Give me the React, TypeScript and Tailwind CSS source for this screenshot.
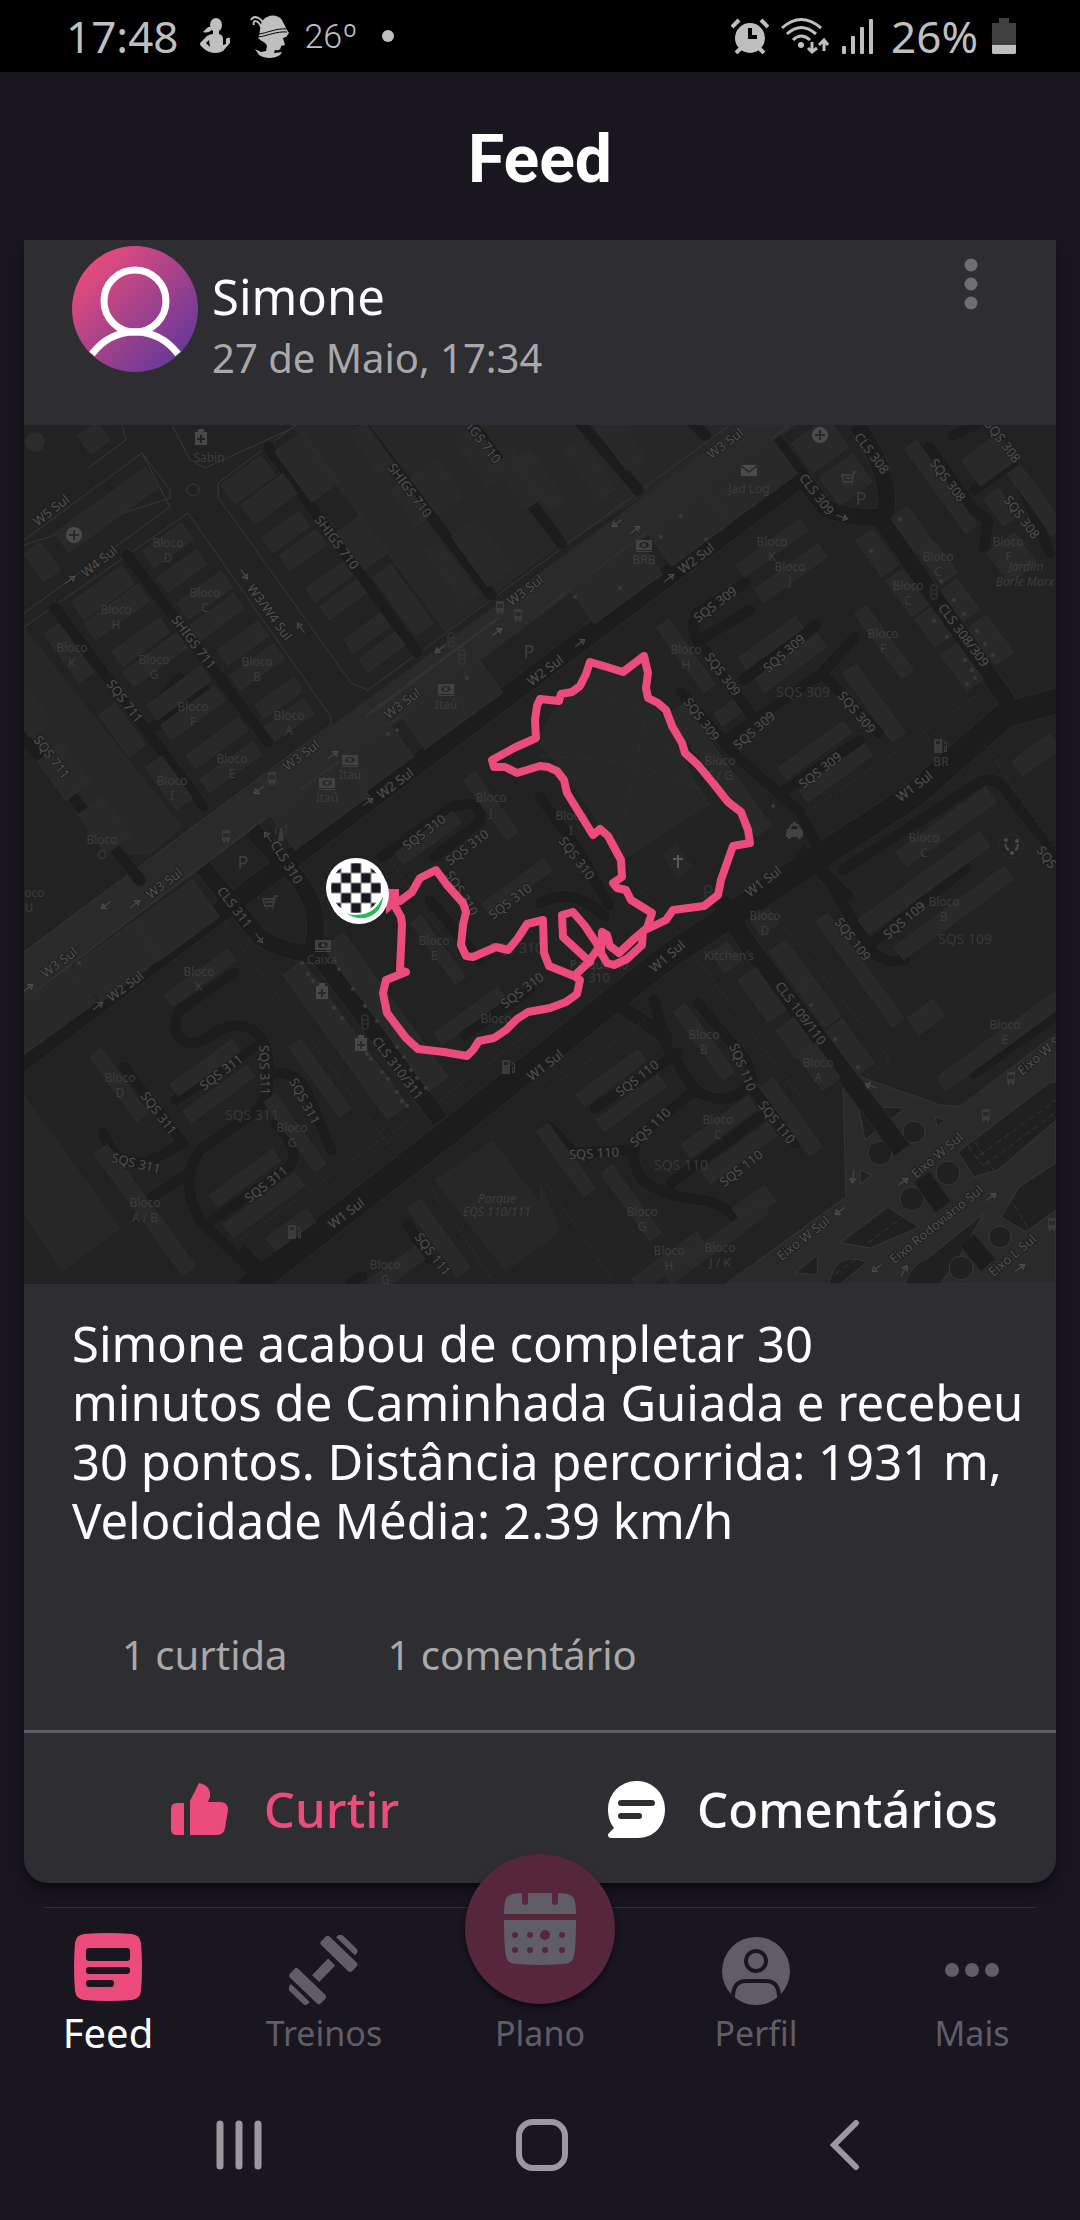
import React, { useState } from 'react';

type Point = [number, number];
type Label = [string, number, number, number];
type Block = [number, number, number, number];

// Bloco buildings: center x, center y, side along the W avenues, side across them
const blocks: Block[] = [
  [248, 480, 50, 24], [269, 499, 52, 24], [286, 532, 45, 18], [303, 550, 45, 18], [329, 582, 45, 16], [343, 600, 45, 16],
  [367, 633, 45, 16], [382, 652, 45, 16], [307, 467, 34, 62], [362, 543, 28, 46], [403, 600, 22, 72], [437, 487, 32, 44],
  [482, 553, 30, 62], [410, 503, 16, 44], [451, 573, 16, 62], [372, 448, 18, 50], [482, 457, 24, 54], [520, 480, 24, 54],
  [168, 545, 48, 20], [182, 571, 48, 18], [205, 595, 54, 20], [217, 617, 54, 18], [243, 643, 50, 18], [257, 667, 54, 18],
  [279, 698, 48, 16], [289, 720, 48, 18], [103, 593, 62, 22], [117, 612, 66, 20], [141, 642, 58, 18], [155, 660, 66, 18],
  [179, 693, 66, 18], [193, 713, 66, 18], [217, 743, 64, 16], [231, 767, 64, 16], [69, 653, 18, 60], [122, 730, 20, 52],
  [169, 783, 20, 52], [107, 510, 112, 24], [42, 562, 20, 34], [94, 438, 24, 22], [26, 710, 26, 48], [64, 772, 30, 48],
  [105, 825, 30, 48], [451, 703, 96, 44], [376, 758, 62, 42], [320, 806, 92, 42], [750, 480, 84, 46], [688, 527, 72, 44],
  [616, 582, 84, 42], [176, 920, 74, 46], [117, 962, 74, 46], [48, 1010, 90, 44], [820, 445, 44, 36], [846, 480, 40, 34],
  [772, 548, 78, 14], [791, 573, 78, 16], [686, 656, 14, 80], [771, 643, 70, 14], [791, 663, 76, 16], [884, 642, 14, 80],
  [874, 703, 16, 84], [815, 750, 80, 14], [836, 773, 80, 14], [728, 713, 24, 14], [720, 770, 18, 150], [877, 553, 20, 44],
  [907, 593, 20, 44], [933, 627, 20, 34], [962, 667, 20, 44], [912, 530, 20, 44], [938, 563, 20, 38], [960, 600, 20, 38],
  [991, 640, 22, 46], [941, 487, 14, 104], [989, 460, 44, 32], [1001, 507, 18, 34], [1036, 500, 16, 76], [1012, 558, 34, 38],
  [946, 827, 110, 18], [1036, 755, 46, 18], [540, 480, 18, 60], [590, 470, 20, 60], [618, 440, 22, 60], [200, 978, 78, 14],
  [119, 1085, 14, 80], [205, 1068, 76, 14], [219, 1094, 78, 14], [320, 1078, 14, 86], [295, 1133, 14, 86], [245, 1178, 78, 14],
  [264, 1205, 88, 16], [145, 1210, 16, 150], [291, 1230, 50, 16], [345, 1040, 24, 178], [386, 1012, 24, 178], [438, 950, 12, 76],
  [439, 1238, 16, 84], [396, 1270, 60, 16], [517, 887, 76, 14], [470, 1016, 78, 14], [428, 838, 70, 14], [491, 806, 14, 74],
  [762, 995, 22, 52], [795, 1038, 22, 34], [819, 1067, 22, 42], [793, 967, 20, 52], [819, 1003, 20, 46], [850, 1047, 20, 54],
  [860, 970, 14, 130], [926, 1017, 32, 20], [924, 883, 150, 18], [954, 913, 136, 16], [1002, 1040, 150, 16], [704, 1042, 14, 84],
  [611, 1078, 76, 14], [631, 1103, 76, 14], [719, 1127, 82, 16], [739, 1153, 82, 16], [791, 1117, 16, 84], [566, 1160, 14, 80],
  [631, 1203, 14, 84], [754, 1205, 40, 20], [716, 1243, 120, 14], [669, 1262, 80, 16], [726, 957, 20, 24], [765, 922, 22, 18],
];

const avenues: [string, number][] = [
  ['M10 1070 678 568 800 478', 20],
  ['M245 1290 344 1213 445 1135 667 957 914 795 1005 715 1060 700', 25],
  ['M203 867 258 935Q275 950 318 955L440 1120', 17],
  ['M252 830 293 873Q325 910 312 950', 17],
  ['M774 440 825 508Q860 522 884 516 895 480 857 425M878 516 1010 705', 17],
  ['M720 900 745 940 902 1150', 18],
  ['M922 1177 943 1207M967 1240 988 1265', 18],
  ['M800 850 850 900M612 1000 670 1040M240 1250 260 1270', 14],
];

const lanes = [
  'M127 555 268 742', 'M55 608 203 806', 'M10 720 140 880', 'M268 447 417 652', 'M362 425 491 595', 'M465 415 561 543',
  'M578 420 638 490', 'M680 410 705 435', 'M160 700 180 678', 'M150 730 205 690', 'M745 583 697 613Q690 625 697 640L760 727',
  'M750 610 705 637', 'M816 625 743 680', 'M855 637 822 673 726 740', 'M822 673 879 733', 'M681 692 733 753 800 812 819 850',
  'M860 740 781 793', 'M929 447 974 510 988 520 984 547', 'M953 435 975 425M974 490 1012 463 1050 553', 'M967 867 867 947',
  'M815 855 840 900 868 945Q880 965 905 960', 'M382 857 450 808Q482 795 480 822L434 857', 'M430 900 479 960', 'M540 903Q574 885 605 917',
  'M540 797 578 850 609 905', 'M465 1035 530 990', 'M234 973 180 1010Q168 1030 185 1042 200 1046 215 1032 250 1015 265 1045 275 1090 258 1110L200 1150Q178 1180 200 1220L248 1267',
  'M176 1100 255 1047', 'M124 1067 183 1143', 'M103 1133Q120 1175 158 1157L183 1143', 'M152 1197 189 1173', 'M270 1073Q300 1070 310 1098L331 1150',
  'M276 1123Q305 1155 285 1170L213 1220', 'M654 1000 667 1047 695 1090Q725 1110 750 1085L795 1143', 'M698 1003 742 1055Q755 1070 750 1085',
  'M695 1090 640 1135Q625 1160 645 1182 670 1198 705 1200 725 1205 740 1223', 'M595 1108 678 1053', 'M550 1127 574 1153 630 1150',
  'M671 1183 760 1117', 'M974 1073 1060 1013', 'M843 870 980 782Q995 775 1005 790L1060 860', 'M408 1225 430 1260', 'M350 1284 362 1276',
];

const footpaths = [
  'M299 430 446 632', 'M225 925 400 1160', 'M240 1240 412 1118', 'M440 1100 545 1020', 'M425 1180 495 1284', 'M694 955 825 1130',
  'M782 925 890 1060 860 1080', 'M805 815 982 692', 'M985 745 1056 850', 'M540 1095 645 1020', 'M540 1175 615 1284',
  'M590 692 640 708 720 820', 'M541 756 630 762 705 790', 'M645 720 618 850', 'M640 890 680 935', 'M390 860 460 960',
];

const streets: Label[] = [
  ['W5 Sul', 51, 510, -38], ['W4 Sul', 99, 561, -38], ['SHIGS 710', 410, 490, 53], ['SHIGS 710', 337, 542, 53], ['SHIGS 710', 479, 436, 53],
  ['W3/W4 Sul', 270, 612, 54], ['SHIGS 711', 194, 642, 53], ['SQS 711', 125, 701, 53], ['SQS 711', 52, 757, 53], ['W3 Sul', 402, 703, -37],
  ['W3 Sul', 301, 755, -37], ['W3 Sul', 525, 590, -37], ['W2 Sul', 395, 783, -37], ['W2 Sul', 545, 670, -37], ['SQS 310', 424, 832, -37],
  ['SQS 310', 467, 847, -37], ['W3 Sul', 725, 443, -37], ['CLS 308', 872, 453, 53], ['CLS 309', 817, 494, 53], ['SQS 308', 1003, 441, 53],
  ['SQS 308', 948, 480, 53], ['SQS 308', 1022, 517, 53], ['W2 Sul', 696, 558, -37], ['SQS 309', 715, 604, -37], ['SQS 309', 723, 674, 53],
  ['SQS 309', 784, 653, -41], ['SQS 309', 702, 719, 53], ['SQS 309', 754, 730, -41], ['SQS 309', 857, 712, 50], ['SQS 309', 820, 770, -38],
  ['CLS 308/309', 964, 635, 53], ['W1 Sul', 914, 786, -37], ['SQS 310', 577, 858, 53], ['SQS', 1047, 857, 53], ['W3 Sul', 164, 883, -37],
  ['W3 Sul', 59, 962, -37], ['CLS 311', 235, 907, 53], ['CLS 310', 287, 862, 58], ['W2 Sul', 125, 986, -37], ['CLS 310/311', 398, 1068, 53],
  ['SQS 311', 265, 1070, 88], ['SQS 311', 221, 1072, -37], ['SQS 311', 305, 1101, 62], ['SQS 311', 159, 1113, 53], ['SQS 311', 136, 1163, 14],
  ['SQS 311', 266, 1184, -38], ['SQS 310', 510, 901, -37], ['SQS 310', 522, 990, -37], ['SQS 310', 462, 893, 58], ['W1 Sul', 346, 1213, -37],
  ['SQS 111', 433, 1254, 53], ['W1 Sul', 545, 1065, -37], ['W1 Sul', 763, 881, -37], ['W1 Sul', 667, 956, -40], ['SQS 109', 853, 939, 53],
  ['SQS 109', 904, 920, -40], ['CLS 109/110', 801, 1013, 53], ['SQS 110', 743, 1067, 68], ['SQS 110', 637, 1078, -38], ['SQS 110', 650, 1127, -43],
  ['SQS 110', 594, 1153, -3], ['SQS 110', 777, 1122, 52], ['SQS 110', 741, 1168, -38], ['Eixo W Sul', 1043, 1052, -40],
  ['Eixo W Sul', 937, 1155, -40], ['Eixo Rodoviário Sul', 936, 1224, -39], ['Eixo W Sul', 803, 1238, -38], ['Eixo L Sul', 1012, 1255, -40],
];

const buildingNames: [string, number, number][] = [
  ['D', 168, 543], ['C', 205, 593], ['H', 116, 610], ['K', 72, 648], ['G', 154, 660], ['B', 257, 662], ['F', 193, 707], ['A', 289, 716],
  ['E', 232, 759], ['I', 172, 781], ['O', 102, 840], ['J', 491, 798], ['K', 772, 542], ['J', 790, 567], ['C', 938, 557], ['F', 1008, 542],
  ['C', 908, 586], ['H', 686, 650], ['F', 883, 634], ['E / G', 720, 761], ['I', 571, 816], ['C', 924, 838], ['U', 29, 893], ['K', 199, 972],
  ['D', 120, 1078], ['G', 292, 1128], ['A / B', 145, 1203], ['E', 434, 941], ['', 496, 1019], ['G', 385, 1265], ['D', 765, 916],
  ['B', 944, 902], ['E', 1005, 1025], ['B', 704, 1035], ['A', 818, 1063], ['C', 718, 1120], ['G', 642, 1212], ['H', 669, 1251], ['J / K', 720, 1248],
];

const places: [string, number, number][] = [
  ['Sabin', 209, 458], ['Itaú', 446, 705], ['Itaú', 350, 775], ['Itaú', 327, 798], ['Jad Log', 749, 489], ['BRB', 644, 560], ['BR', 941, 762],
  ['Caixa', 322, 960], ["Kitchen's", 729, 956], ['Parquinho', 599, 965], ['310', 599, 978],
];

const districts: [string, number, number][] = [
  ['SQS 309', 803, 692], ['SQS 311', 252, 1115], ['SQS 109', 965, 939], ['SQS 110', 681, 1165], ['SQS 310', 516, 948],
];

const arrows: [number, number, number][] = [
  [70, 580, -37], [244, 574, 57], [301, 628, -125], [440, 649, 143], [497, 632, -37], [259, 790, 143], [333, 755, -37], [368, 802, -37],
  [268, 837, -125], [617, 523, 143], [635, 530, -37], [669, 578, -37], [580, 643, -37], [842, 517, 20], [106, 905, 143], [135, 904, -37],
  [98, 1006, -37], [259, 938, 55], [871, 1086, 200], [853, 1177, 95], [903, 1182, -37], [840, 1211, 143], [991, 1197, -37], [877, 1268, 143],
  [904, 1271, -60], [1020, 1268, -37], [28, 988, -37],
];

const shops: Point[] = [
  [681, 516], [661, 537], [706, 539], [620, 588], [575, 597], [900, 519], [871, 551], [941, 581], [954, 600], [964, 614], [934, 621],
  [947, 637], [977, 631], [985, 644], [993, 655], [965, 660], [972, 670], [975, 678], [967, 684], [773, 806], [388, 734], [397, 730],
  [467, 678], [79, 963], [302, 963], [308, 974], [313, 981], [334, 1008], [342, 1018], [367, 1054], [371, 1059], [382, 1072], [388, 1079],
  [397, 1092], [402, 1101], [407, 1106], [339, 969], [353, 989], [365, 1006], [377, 1021], [397, 1047], [404, 1057], [411, 1070],
  [417, 1078], [426, 1088], [811, 1005], [835, 1039], [858, 1067],
];

const cash: Point[] = [[446, 689], [350, 760], [327, 783], [644, 545], [323, 945]];
const buses: Point[] = [[500, 607], [518, 615], [272, 778], [226, 836], [1011, 1078], [986, 1115], [1052, 1224]];
const lights: Point[] = [[451, 640], [462, 657], [934, 592], [365, 1022]];
const pumps: Point[] = [[940, 746], [508, 1067], [294, 1232]];
const pharmacies: Point[] = [[201, 438], [322, 992], [361, 1044]];

const mainRoute =
  'M644 656 623 672 607 667 590 662 586 674 580 686 572 692 561 694 559 701 540 699 537 706 535 720 536 738 514 748 492 760 494 767 505 767 517 773 540 766 548 767 557 771 564 780 567 793 580 814 593 835 600 829 608 836 621 860 622 877 613 883 617 888 626 890 631 900 652 913 647 928 635 938 619 953 610 946 607 935 602 932 601 953 607 963 614 965 627 959 642 945 643 931 666 920 673 910 704 906 718 895 721 880 728 860 733 846 750 843 748 830 741 812 728 802 713 783 698 765 685 753 682 743 672 726 666 710 658 703 648 698 646 688 648 673Z';
const blockRoute =
  'M388 903 400 901 412 892 420 878 436 870 447 885 463 903 466 912 463 925 461 945 466 956 473 957 496 947 508 950 518 938 527 924 543 920 544 953 549 966 574 976 588 963 599 947 585 926 573 912 562 915 563 937 577 950 590 962M574 976 580 980 577 994 566 1002 550 1008 528 1012 517 1019 506 1030 494 1038 479 1041 473 1050 467 1056 444 1052 418 1049 406 1038 387 1013 383 993 386 980 406 972 400 970 402 925 401 917 393 903';

const CheckeredFlag = () => (
  <g>
    <circle cx="356" cy="888" r="30" fill="#fff" />
    <circle cx="359" cy="894" r="30" fill="#fff" />
    <clipPath id="flag">
      <circle cx="356" cy="888" r="25" />
    </clipPath>
    <g clipPath="url(#flag)" fill="#1a1620" stroke="#8b8990" strokeWidth="1">
      {[0, 1, 2, 3, 4].map((row) =>
        [0, 1, 2, 3, 4]
          .filter((col) => (row + col) % 2 === 0)
          .map((col) => <rect key={`${row}-${col}`} x={331 + col * 10} y={863 + row * 10} width="10" height="10" />)
      )}
    </g>
    <path d="M347 914Q374 919 383 896 382 914 365 918 355 919 347 914Z" fill="#27b95a" />
  </g>
);

const RouteMap = () => (
  <svg viewBox="24 425 1032 859" className="block w-full" role="img" aria-label="Mapa do percurso" fontFamily="'Noto Sans', sans-serif" textAnchor="middle">
    <rect x="24" y="425" width="1032" height="859" fill="#222222" />

    {/* lots and parks */}
    <g fill="#272727">
      <path d="M24 627 182 827 150 855 105 855 24 740Z" />
      <path d="M24 1095 121 1228 62 1272 24 1215Z" />
      <path d="M434 1180 493 1140 560 1230 506 1272Z" />
      <path d="M290 425 446 632 540 560 760 425Z" />
      <path d="M536 740 560 702 600 668 644 668 660 712 709 805 624 860 565 775Z" />
      <path d="M663 855 676 843 692 865 678 880Z" />
      <path d="M540 1180 560 1230 540 1250Z" />
    </g>

    {/* W3 */}
    <path d="M24 952 775 400 830 400 24 1000Z" fill="#2a2a2a" />
    <g fill="none" stroke="#383838" strokeWidth="1">
      <path d="M24 952 331 725V717L188 513 24 627M24 613 170 507 142 453M24 545 170 498 170 490 142 453 24 540" />
      <path d="M218 497V483L296 425M218 497 351 683 368 690 764 400" />
      <path d="M24 1000 265 818M300 790 470 665M540 612 790 425" />
      <path d="M172 425 190 460 205 468 293 428M88 468 126 440 122 425" />
      <path d="M366 716 500 617" strokeWidth="3" stroke="#323232" />
    </g>

    {/* expressway */}
    <path d="M726 1284 846 1197 843 1085 858 1076 940 1105 960 1107 1056 1034V1284Z" fill="#2a2a2a" stroke="#363636" />
    <g fill="#202020" stroke="#373737" strokeWidth="1">
      <path d="M958 1152 1050 1082H1060V1117L998 1170 974 1177Z" />
      <path d="M840 1243 888 1207 919 1227 871 1248Z" />
      <path d="M1001 1217 1019 1187 1060 1160V1207L1026 1232Z" />
      <path d="M905 1284Q910 1265 929 1257L984 1213 958 1260 940 1284Z" />
      <path d="M829 1284Q835 1250 867 1262L840 1284Z" />
      <path d="M858 1106 905 1108 865 1140ZM860 1170 872 1175 860 1184ZM795 1273 818 1255 817 1275ZM935 1116 945 1121 937 1126Z" />
      <circle cx="880" cy="1153" r="12" />
      <circle cx="914" cy="1132" r="11" />
      <circle cx="912" cy="1199" r="12" />
      <circle cx="948" cy="1173" r="12" />
      <circle cx="1000" cy="1237" r="11" />
      <circle cx="961" cy="1268" r="12" />
    </g>
    <g fill="none" stroke="#363636" strokeDasharray="6 4">
      <path d="M980 1155 1056 1100M985 1165 1056 1112M868 1243 905 1215M835 1274 855 1260" />
      <path d="M968 1146 988 1172M975 1142 994 1170M1014 1205 1028 1228" />
    </g>

    {/* avenues, each with a lighter casing below */}
    <g fill="none" stroke="#292929" strokeLinejoin="round">
      {avenues.map(([d, width]) => <path key={d} d={d} strokeWidth={width + 2} />)}
    </g>
    <g fill="none" stroke="#262626" strokeWidth="13" strokeLinecap="round" strokeLinejoin="round">
      {lanes.map((d) => <path key={d} d={d} />)}
    </g>
    <g fill="none" stroke="#1c1c1c" strokeLinejoin="round">
      {avenues.map(([d, width]) => <path key={d} d={d} strokeWidth={width} />)}
    </g>
    <g fill="none" stroke="#1c1c1c" strokeWidth="11" strokeLinecap="round" strokeLinejoin="round">
      {lanes.map((d) => <path key={d} d={d} />)}
    </g>
    <g fill="#292929" stroke="#2d2d2d" strokeWidth="1">
      {blocks.map(([x, y, w, h]) => (
        <rect key={`${x}-${y}`} x={-w / 2} y={-h / 2} width={w} height={h} transform={`translate(${x} ${y}) rotate(-36)`} />
      ))}
    </g>
    <g fill="none" stroke="#303030" strokeDasharray="3 3">
      {footpaths.map((d) => <path key={d} d={d} />)}
    </g>

    {/* points of interest */}
    <g fill="#3b3b3b">
      {shops.map(([x, y]) => <circle key={`${x}-${y}`} cx={x} cy={y} r="2" />)}
      {cash.map(([x, y]) => (
        <g key={`${x}-${y}`} fill="#424242">
          <path fillRule="evenodd" d={`M${x - 8} ${y - 5}h16v10h-16zM${x - 5} ${y}a5 3 0 0 0 10 0a5 3 0 0 0 -10 0z`} />
          <circle cx={x} cy={y} r="2" />
          <rect x={x - 8} y={y + 6} width="16" height="1" />
        </g>
      ))}
      {buses.map(([x, y]) => (
        <path key={`${x}-${y}`} fillRule="evenodd" d={`M${x - 4} ${y - 6}h8v11h-1v2h-2v-2h-2v2h-2v-2h-1zM${x - 3} ${y - 3}h6v4h-6z`} />
      ))}
      {pumps.map(([x, y]) => (
        <path key={`${x}-${y}`} fillRule="evenodd" d={`M${x - 6} ${y - 7}h8v14h-8zM${x - 4} ${y - 5}h4v3h-4zM${x + 3} ${y - 6}l4 3v9h-3v-6h1v4h1v-6l-3-3z`} />
      ))}
      {pharmacies.map(([x, y]) => (
        <path key={`${x}-${y}`} fillRule="evenodd" fill="#484848" d={`M${x - 3} ${y - 9}h6v3h3v13h-12v-13h3zM${x - 1} ${y - 3}h2v3h3v2h-3v3h-2v-3h-3v-2h3z`} />
      ))}
      {[[74, 535], [820, 435]].map(([x, y]) => (
        <path key={x} fillRule="evenodd" fill="#4b4b4b" d={`M${x - 8} ${y}a8 8 0 0 0 16 0a8 8 0 0 0 -16 0zM${x - 1} ${y - 5}h2v4h4v2h-4v4h-2v-4h-4v-2h4z`} />
      ))}
      <circle cx="35" cy="442" r="10" fill="#2c2c2c" />
      <path d="M741 465h16l-8 6zM741 467l8 6 8-6v9h-16z" fill="#4b4b4b" />
      <path fillRule="evenodd" d="M786 833q0-4 3-5l2-4h2v-2h3v2h2l2 4q3 1 3 5v4h-2v2h-3v-2h-7v2h-3v-2h-2zM792 826l-1 3h7l-1-3z" fill="#424242" />
      <path d="M677 855h2v3h4v2h-4v8h-2v-8h-4v-2h4z" fill="#5a5a5a" />
      <path d="M280 828h2l2 13h-6z" />
      <circle cx="1006" cy="840" r="2" fill="#4b4b4b" />
      <circle cx="1017" cy="841" r="2" fill="#4b4b4b" />
      <circle cx="1012" cy="853" r="2" fill="#4b4b4b" />
    </g>
    <g fill="none" stroke="#3b3b3b" strokeWidth="1">
      {lights.map(([x, y]) => (
        <g key={`${x}-${y}`}>
          <rect x={x - 3} y={y - 7} width="6" height="14" rx="2" />
          <path d={`M${x - 2} ${y - 2}h4M${x - 2} ${y + 2}h4`} />
        </g>
      ))}
      {[[849, 478], [270, 902]].map(([x, y]) => (
        <path key={x} d={`M${x + 8} ${y - 6}h-3l-2 10h-8l-2-7h11M${x - 4} ${y}h8M${x - 4} ${y + 7}h1M${x + 2} ${y + 7}h1`} strokeWidth="2" />
      ))}
      <circle cx="193" cy="490" r="6" />
      <circle cx="1011" cy="846" r="12" stroke="#2c2c2c" />
      <path d="M1005 844l2 5 2 1M1018 844l-1 5-2 1" strokeWidth="2" stroke="#4b4b4b" />
      <path d="M277 826q-3 4 0 8M285 826q3 4 0 8" />
    </g>
    <g fill="none" stroke="#4d4d4d" strokeWidth="1">
      {arrows.map(([x, y, a]) => (
        <path key={`${x}-${y}`} d="M-6 0H5M2-3 6 0 2 3Z" transform={`translate(${x} ${y}) rotate(${a})`} />
      ))}
    </g>

    {/* labels */}
    <g fill="#3d3d3d" fontSize="12">
      {buildingNames.map(([name, x, y]) => (
        <React.Fragment key={`${x}-${y}`}>
          <text x={x} y={y + 4}>Bloco</text>
          <text x={x} y={y + 19}>{name}</text>
        </React.Fragment>
      ))}
      {places.map(([name, x, y]) => <text key={`${x}-${y}`} x={x} y={y + 4}>{name}</text>)}
      <g fontStyle="italic">
        <text x="1026" y="571">Jardim</text>
        <text x="1025" y="586">Burle Marx</text>
        <text x="497" y="1203">Parque</text>
        <text x="497" y="1216">EQS 110/111</text>
      </g>
    </g>
    <g fill="#383838" fontSize="14">
      {districts.map(([name, x, y]) => <text key={`${x}-${y}`} x={x} y={y + 5}>{name}</text>)}
    </g>
    <g fill="#3e3e3e" fontSize="18">
      <text x="529" y="658">P</text>
      <text x="861" y="505">P</text>
      <text x="243" y="869">P</text>
      <text x="708" y="898" fill="#303030">P</text>
    </g>
    <g fill="#505050" stroke="#1e1e1e" strokeWidth="2" paintOrder="stroke" fontSize="13">
      {streets.map(([name, x, y, a]) => (
        <text key={`${x}-${y}`} y="5" transform={`translate(${x} ${y}) rotate(${a})`}>{name}</text>
      ))}
    </g>

    <g fill="none" stroke="#ec4c7b" strokeWidth="8" strokeLinejoin="round" strokeLinecap="round">
      <path d={mainRoute} />
      <path d={blockRoute} />
    </g>
    <path d="M386 889h13v14l-13 11z" fill="#ec4c7b" />
    <CheckeredFlag />
  </svg>
);

const StatusBar = () => (
  <div className="flex h-[72px] items-center justify-between bg-black pl-[66px] pr-16 text-[44px] leading-[48px] text-[#bfbfbf]">
    <div className="flex items-center">
      <span>17:48</span>
      <svg viewBox="0 0 30 36" className="ml-[22px] h-9 w-[30px]" fill="currentColor">
        <ellipse cx="16" cy="7" rx="6" ry="7" />
        <path d="M12 9Q9 8 7 10L3 14Q8 16 13 11Z" />
        <path fillRule="evenodd" d="M13 12h6v4q4 1 4 5v6l3-1v-5q2-2 4-1v5l-7 8q-3 2-8 2-8 0-14-7-2-2 0-4l6-6q3-2 6-2zM9 22l-3 3 4 4z" />
      </svg>
      <svg viewBox="0 0 40 44" className="ml-5 h-11 w-10" fill="currentColor">
        <path d="M8 24c3-6 1-12 5-18 5-6 15-6 19 0l5 10 2 3-3 4-3 1 2 7-4 1c0 4-3 5-6 4l-1 3 8-1-2 3c-6 4-15 4-21 0l-4-6 6 3 5-1 1-5c-1-4-5-4-9-8z" />
        <path d="M14 13C13 4 4 0 1 6M11 13C8 5 2 6 4 11" fill="none" stroke="currentColor" strokeWidth="2" />
        <path d="M9 20c8-1 18-6 27-5M8 23c9-1 19-6 29-5" fill="none" stroke="#000" strokeWidth="1" />
      </svg>
      <span className="ml-[14px] font-[Roboto,sans-serif] text-[34px] font-light">26º</span>
      <span className="ml-6 size-3 rounded-full bg-[#bfbfbf]" />
    </div>
    <div className="flex items-center">
      <svg viewBox="0 0 38 36" className="h-9 w-[38px]" fill="currentColor">
        <circle cx="19" cy="20" r="15" />
        <path d="m1 9 7-7M37 9l-7-7M5 35l5-5M33 35l-5-5" stroke="currentColor" strokeWidth="4" />
        <path d="M19 10v9h7" fill="none" stroke="#000" strokeWidth="4" />
      </svg>
      <svg viewBox="0 0 48 38" className="ml-3 h-[38px] w-12" fill="none" stroke="currentColor" strokeWidth="3">
        <path d="M1 11Q20-6 40 11M6 17q14-13 29 0M12 23q8-8 17 0" />
        <circle cx="20" cy="28" r="3" fill="currentColor" stroke="none" />
        <path d="M31 25v10M27 31l4 4 5-4M43 34V23M38 28l5-5 4 5" />
      </svg>
      <svg viewBox="0 0 32 36" className="ml-3 h-9 w-8" fill="currentColor">
        <rect x="1" y="28" width="4" height="8" rx="1" />
        <rect x="10" y="18" width="4" height="18" rx="1" />
        <rect x="19" y="9" width="4" height="27" rx="1" />
        <rect x="28" y="1" width="4" height="35" rx="1" />
      </svg>
      <span className="ml-[18px]">26%</span>
      <svg viewBox="0 0 24 36" className="ml-[14px] h-9 w-6" fill="currentColor">
        <path d="M7 0h10v5h7v22H0V5h7z" fill="#404040" />
        <path d="M0 27h24v8l-1 1H1l-1-1z" />
      </svg>
    </div>
  </div>
);

const Avatar = () => (
  <svg viewBox="0 0 126 126" className="size-[126px] shrink-0">
    <defs>
      <linearGradient id="avatar" x1="0.1" y1="0.1" x2="0.9" y2="0.9">
        <stop offset="0" stopColor="#ec4c7b" />
        <stop offset="1" stopColor="#63389a" />
      </linearGradient>
    </defs>
    <circle cx="63" cy="63" r="63" fill="url(#avatar)" />
    <g fill="none" stroke="#fff" strokeWidth="7">
      <circle cx="63" cy="55" r="31" />
      <path d="M20 108Q37 86 63 86T106 108" />
    </g>
  </svg>
);

const FeedIcon = () => (
  <svg viewBox="0 0 68 68" className="size-[68px]">
    <path d="M10 1Q34-1 58 1 66 2 67 10 69 34 67 58 66 66 58 67 34 69 10 67 2 66 1 58-1 34 1 10 2 2 10 1Z" fill="#ec4c7b" />
    <g fill="#1a1620">
      <rect x="12" y="15" width="44" height="13" rx="3" />
      <rect x="12" y="34" width="44" height="7" rx="3" />
      <rect x="12" y="47" width="28" height="7" rx="3" />
    </g>
  </svg>
);

const DumbbellIcon = () => (
  <svg viewBox="0 0 70 70" className="size-[70px]" fill="currentColor">
    <g transform="rotate(-46 35 35)">
      <rect x="23" y="30" width="23" height="10" />
      <rect x="6" y="13" width="12" height="43" rx="3" />
      <rect x="51" y="13" width="12" height="43" rx="3" />
      <path d="M2 21v26H0q-4 0-4-4V25q0-4 4-4zM67 21v26h2q4 0 4-4V25q0-4-4-4z" />
    </g>
  </svg>
);

const CalendarIcon = () => (
  <svg viewBox="0 0 72 72" className="size-[72px]" fill="#605d68">
    <path d="M0 21Q0 8 3 4 7 0 18 0V9a3 3 0 0 0 6 0V0H48V9a3 3 0 0 0 6 0V0Q65 0 69 4 72 8 72 21Z" />
    <path d="M0 27H72Q72 60 69 66 67 71 58 71 36 73 14 71 5 71 3 66 0 60 0 27Z" />
    <g fill="#56273a">
      <circle cx="11" cy="42" r="3" />
      <circle cx="26" cy="42" r="3" />
      <circle cx="41" cy="42" r="5" />
      <circle cx="58" cy="42" r="3" />
      <circle cx="11" cy="57" r="3" />
      <circle cx="26" cy="57" r="3" />
      <circle cx="41" cy="57" r="3" />
      <circle cx="58" cy="57" r="3" />
    </g>
  </svg>
);

const ProfileIcon = () => (
  <svg viewBox="0 0 68 68" className="size-[68px]">
    <clipPath id="profile">
      <circle cx="34" cy="34" r="34" />
    </clipPath>
    <g clipPath="url(#profile)">
      <rect width="68" height="68" fill="currentColor" />
      <g fill="none" stroke="#1a1620" strokeWidth="4">
        <circle cx="34" cy="24" r="10" />
        <path d="M11 68V58Q12 44 24 44H44Q56 44 57 58V68" />
      </g>
    </g>
  </svg>
);

const MoreIcon = () => (
  <svg viewBox="0 0 54 14" className="mb-7 h-[14px] w-[54px]" fill="currentColor">
    <circle cx="7" cy="7" r="7" />
    <circle cx="27" cy="7" r="7" />
    <circle cx="47" cy="7" r="7" />
  </svg>
);

const TabBar = () => (
  <nav className="relative pt-6">
    <div className="mx-11 h-px bg-[#302c34]" />
    <div className="grid grid-cols-5 text-[34px] leading-[48px] text-[#605d68]">
      <a href="#feed" className="flex h-[149px] flex-col items-center justify-end text-[40px] text-white">
        <FeedIcon />
        <span className="mt-2">Feed</span>
      </a>
      <a href="#treinos" className="flex h-[149px] flex-col items-center justify-end">
        <DumbbellIcon />
        <span className="mt-1">Treinos</span>
      </a>
      <a href="#plano" className="flex h-[149px] flex-col items-center justify-end">
        <span className="absolute -top-[29px] flex size-[150px] items-center justify-center rounded-full bg-[#56273a] shadow-md shadow-black/50">
          <CalendarIcon />
        </span>
        <span>Plano</span>
      </a>
      <a href="#perfil" className="flex h-[149px] flex-col items-center justify-end">
        <ProfileIcon />
        <span className="mt-1">Perfil</span>
      </a>
      <a href="#mais" className="flex h-[149px] flex-col items-center justify-end">
        <MoreIcon />
        <span className="mt-1">Mais</span>
      </a>
    </div>
  </nav>
);

const SystemNav = () => (
  <div className="grid grid-cols-3 place-items-center pt-[62px] pr-[84px] pb-12 pl-[88px] text-[#9c999e]">
    <button aria-label="Recentes">
      <svg viewBox="0 0 46 52" className="h-[52px] w-[46px]" stroke="currentColor" strokeWidth="7" strokeLinecap="round">
        <path d="M4 5V47M23 5V47M42 5V47" />
      </svg>
    </button>
    <button aria-label="Início">
      <svg viewBox="0 0 52 52" className="size-[52px]" fill="none" stroke="currentColor" strokeWidth="6">
        <rect x="3" y="3" width="46" height="46" rx="14" />
      </svg>
    </button>
    <button aria-label="Voltar">
      <svg viewBox="0 0 30 52" className="h-[52px] w-[30px]" fill="none" stroke="currentColor" strokeWidth="6" strokeLinecap="round">
        <path d="M26 4 4 26 26 48" />
      </svg>
    </button>
  </div>
);

const App = () => {
  const [liked, setLiked] = useState(true);

  return (
    <div className="min-h-screen bg-[#1a1620] font-['Noto_Sans',sans-serif] text-white">
      <StatusBar />
      <header className="flex h-[168px] items-center justify-center pt-2">
        <h1 className="font-[Roboto,sans-serif] text-[66px] leading-[72px] font-bold">Feed</h1>
      </header>

      <article className="mx-6 rounded-b-3xl bg-[#2e2d32] shadow-lg shadow-black/50">
        <div className="flex h-[185px] items-start pt-[6px] pr-[78px] pl-12">
          <Avatar />
          <div className="ml-[14px] flex-1 pt-5">
            <h2 className="text-[49px] leading-[60px]">Simone</h2>
            <p className="text-[40px] leading-[64px] text-[#a9a8ab]">27 de Maio, 17:34</p>
          </div>
          <button aria-label="Mais opções" className="pt-3">
            <svg viewBox="0 0 14 52" className="h-[52px] w-[14px]" fill="#6f6e70">
              <circle cx="7" cy="7" r="6.5" />
              <circle cx="7" cy="26" r="6.5" />
              <circle cx="7" cy="45" r="6.5" />
            </svg>
          </button>
        </div>

        <RouteMap />

        <p className="pt-[30px] pr-6 pl-12 text-[49px] leading-[59px]">
          Simone acabou de completar 30
          <br />
          minutos de Caminhada Guiada e recebeu
          <br />
          30 pontos. Distância percorrida: 1931 m,
          <br />
          Velocidade Média: 2.39 km/h
        </p>

        <div className="flex gap-[100px] px-[98px] pt-20 pb-[50px] text-[40px] leading-[50px] text-[#a9a8ab]">
          <span>1 curtida</span>
          <span>1 comentário</span>
        </div>

        <div className="grid h-[153px] grid-cols-2 border-t-[3px] border-[#5f5d63] text-[49px] leading-[60px] font-medium">
          <button
            onClick={() => setLiked(!liked)}
            className={`flex items-center justify-center gap-9 pt-[2px] pl-[6px] ${liked ? 'text-[#ec4c7b]' : 'text-white'}`}
          >
            <svg viewBox="0 0 57 52" className="h-[52px] w-[57px]" fill="currentColor">
              <path d="M13 20v32H6q-6 0-6-6V26q0-6 6-6zM19 18 28 0q12 2 11 14l-2 5H49q8 0 8 8l-3 18q-1 7-8 7H19z" />
            </svg>
            Curtir
          </button>
          <button className="flex items-center justify-center gap-8 pt-[2px] pl-[10px]">
            <svg viewBox="0 0 57 57" className="size-[57px]">
              <path d="M28 0a28 28 0 0 1 29 28C57 46 45 57 30 57H3c-3 0-4-3-2-5l5-5C2 42 0 36 0 28A28 28 0 0 1 28 0Z" fill="#fff" />
              <path d="M13 22H44M13 35H31" stroke="#2e2d32" strokeWidth="6" strokeLinecap="round" />
            </svg>
            Comentários
          </button>
        </div>
      </article>

      <TabBar />
      <SystemNav />
    </div>
  );
};

export default App;
